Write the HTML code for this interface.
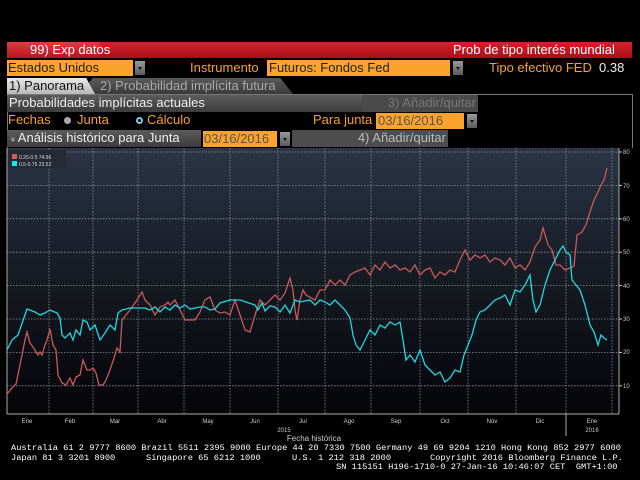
<!DOCTYPE html>
<html><head><meta charset="utf-8"><style>
*{margin:0;padding:0;box-sizing:border-box}
body{width:640px;height:480px;background:#000;position:relative;overflow:hidden;font-family:"Liberation Sans",sans-serif;font-size:13px}
.a{position:absolute;white-space:nowrap;line-height:16px}
.or{color:#f7a133}
.fld{background:#fba32d;color:#222}
.dd{position:absolute;width:10px;height:14px;background:linear-gradient(#9a9a9a,#5a5a5a);}
.dd:after{content:"";position:absolute;left:3px;top:6px;border:2px solid transparent;border-top:3px solid #111}
.mono{font-family:"Liberation Mono",monospace;font-size:8.7px;color:#fff;line-height:10px;white-space:pre}
</style></head><body>
<div class="a" style="left:7px;top:42px;width:625px;height:16px;background:linear-gradient(#d6202c,#a8101a)"></div>
<div class="a" style="left:7px;top:42px;width:93px;height:16px;background:linear-gradient(#e43a44,#b3141e)"></div>
<div class="a" style="left:30px;top:42px;color:#fff">99) Exp datos</div>
<div class="a" style="left:453px;top:42px;color:#fff">Prob de tipo interés mundial</div>

<div class="a fld" style="left:7px;top:60px;width:126px;height:16px;padding-left:1px">Estados Unidos</div>
<div class="dd" style="left:135px;top:61px"></div>
<div class="a or" style="left:190px;top:60px">Instrumento</div>
<div class="a fld" style="left:267px;top:60px;width:183px;height:16px;padding-left:2px">Futuros: Fondos Fed</div>
<div class="dd" style="left:453px;top:61px"></div>
<div class="a or" style="left:489px;top:60px">Tipo efectivo FED</div>
<div class="a" style="left:599px;top:60px;color:#eee">0.38</div>

<div class="a" style="left:80px;top:78px;width:213px;height:16px;background:linear-gradient(#5a5a5a,#3a3a3a);color:#aaa;padding-left:20px;clip-path:polygon(6% 0,94% 0,100% 100%,0 100%)">2) Probabilidad implícita futura</div>
<div class="a" style="left:7px;top:78px;width:88px;height:16px;background:linear-gradient(#e8e8e8,#b8b8b8);color:#111;padding-left:2px;clip-path:polygon(0 0,90% 0,100% 100%,0 100%)">1) Panorama</div>

<div class="a" style="left:7px;top:94px;width:626px;height:54px;border:1px solid #777;border-bottom:none"></div>
<div class="a" style="left:7px;top:95px;width:355px;height:17px;background:linear-gradient(#5c5c5c,#3c3c3c);color:#eee;padding-left:2px">Probabilidades implícitas actuales</div>
<div class="a" style="left:362px;top:95px;width:116px;height:17px;background:#4a4a4a;color:#777;text-align:right;padding-right:2px">3) Añadir/quitar</div>

<div class="a or" style="left:8px;top:112px">Fechas</div>
<div class="a" style="left:64px;top:117px;width:7px;height:7px;border-radius:50%;background:#aaa"></div>
<div class="a or" style="left:77px;top:112px">Junta</div>
<div class="a" style="left:136px;top:117px;width:7px;height:7px;border-radius:50%;border:2px solid #7cc8e8"></div>
<div class="a or" style="left:147px;top:112px">Cálculo</div>
<div class="a or" style="left:313px;top:112px">Para junta</div>
<div class="a fld" style="left:376px;top:113px;width:88px;height:16px;padding-left:2px;color:#555">03/16/2016</div>
<div class="dd" style="left:467px;top:114px"></div>

<div class="a" style="left:7px;top:130px;width:194px;height:17px;background:linear-gradient(#5c5c5c,#3c3c3c);color:#eee;padding-left:4px"><span style="font-size:7px;color:#bbb">¥</span> Análisis histórico para Junta</div>
<div class="a fld" style="left:203px;top:131px;width:74px;height:16px;padding-left:1px;color:#555">03/16/2016</div>
<div class="dd" style="left:280px;top:132px"></div>
<div class="a" style="left:292px;top:130px;width:156px;height:17px;background:#4d4d4d;color:#bbb;text-align:right;padding-right:2px">4) Añadir/quitar</div>

<svg class="a" style="left:0;top:0" width="640" height="480">
<defs><linearGradient id="bg" x1="0" y1="0" x2="0" y2="1">
<stop offset="0" stop-color="#2c3446"/><stop offset="0.3" stop-color="#1d2431"/><stop offset="0.55" stop-color="#14181e"/><stop offset="0.8" stop-color="#0b0c14"/><stop offset="1" stop-color="#050505"/></linearGradient></defs>
<rect x="7" y="148" width="612" height="266" fill="url(#bg)"/>
<g stroke="#8a8f98" stroke-width="0.8" stroke-dasharray="1.5,1.5">
<line x1="7" x2="619" y1="152" y2="152"/><line x1="7" x2="619" y1="185.4" y2="185.4"/><line x1="7" x2="619" y1="218.8" y2="218.8"/><line x1="7" x2="619" y1="252.2" y2="252.2"/><line x1="7" x2="619" y1="285.6" y2="285.6"/><line x1="7" x2="619" y1="319" y2="319"/><line x1="7" x2="619" y1="352.4" y2="352.4"/><line x1="7" x2="619" y1="385.8" y2="385.8"/>
<line y1="148" y2="414" x1="49" x2="49"/><line y1="148" y2="414" x1="93" x2="93"/><line y1="148" y2="414" x1="138" x2="138"/><line y1="148" y2="414" x1="184" x2="184"/><line y1="148" y2="414" x1="230" x2="230"/><line y1="148" y2="414" x1="278" x2="278"/><line y1="148" y2="414" x1="325" x2="325"/><line y1="148" y2="414" x1="371" x2="371"/><line y1="148" y2="414" x1="420" x2="420"/><line y1="148" y2="414" x1="468" x2="468"/><line y1="148" y2="414" x1="516" x2="516"/><line y1="148" y2="414" x1="566" x2="566"/><line y1="148" y2="414" x1="612" x2="612"/>
</g>
<line x1="7" x2="7" y1="148" y2="414" stroke="#aaa"/>
<line x1="619" x2="619" y1="148" y2="414" stroke="#aaa"/>
<line x1="7" x2="619" y1="414" y2="414" stroke="#aaa"/>
<line x1="566" x2="566" y1="414" y2="436" stroke="#aaa"/>
<g fill="#ccc" font-size="6" font-family="Liberation Sans,sans-serif">
<text x="623" y="154">80</text><text x="623" y="188">70</text><text x="623" y="221">60</text><text x="623" y="254">50</text><text x="623" y="288">40</text><text x="623" y="321">30</text><text x="623" y="354">20</text><text x="623" y="388">10</text>
<g text-anchor="middle"><text x="27" y="423">Ene</text><text x="70" y="423">Feb</text><text x="115" y="423">Mar</text><text x="162" y="423">Abr</text><text x="208" y="423">May</text><text x="255" y="423">Jun</text><text x="303" y="423">Jul</text><text x="349" y="423">Ago</text><text x="396" y="423">Sep</text><text x="445" y="423">Oct</text><text x="492" y="423">Nov</text><text x="540" y="423">Dic</text><text x="592" y="423">Ene</text>
<text x="284" y="432">2015</text><text x="592" y="432">2016</text></g>
<text x="314" y="441" font-size="8" text-anchor="middle">Fecha histórica</text>
</g>
<g stroke="#ccc"><line x1="619" x2="622" y1="152" y2="152"/><line x1="619" x2="622" y1="185.4" y2="185.4"/><line x1="619" x2="622" y1="218.8" y2="218.8"/><line x1="619" x2="622" y1="252.2" y2="252.2"/><line x1="619" x2="622" y1="285.6" y2="285.6"/><line x1="619" x2="622" y1="319" y2="319"/><line x1="619" x2="622" y1="352.4" y2="352.4"/><line x1="619" x2="622" y1="385.8" y2="385.8"/></g>
<rect x="8" y="150" width="58" height="18" fill="#252a34"/>
<rect x="12" y="154" width="5" height="5" fill="#e05555"/><rect x="12" y="161" width="5" height="5" fill="#18e8f0"/>
<text x="19" y="159" font-size="5" fill="#ddd" font-family="Liberation Sans,sans-serif">0.25-0.5  74.96</text>
<text x="19" y="166" font-size="5" fill="#ddd" font-family="Liberation Sans,sans-serif">0.5-0.75  23.52</text>
<polyline fill="none" stroke="#c85a5a" stroke-width="1.3" points="7,394 12,388 16,384 20,365 25,340 27,332 30,343 35,350 38,355 40,352 42,355 45,345 47,340 50,329 53,345 56,350 58,375 62,383 66,385 70,378 73,385 76,377 80,375 83,360 87,370 90,370 93,368 96,373 99,385 103,385 106,380 110,370 115,355 117,348 120,352 122,320 130,310 137,300 142,292 145,300 150,305 155,315 160,307 165,305 168,302 170,305 175,300 180,310 185,320 190,320 195,320 200,312 205,300 210,297 215,310 220,313 225,312 230,315 235,300 240,315 245,330 250,332 255,315 260,300 265,305 275,295 280,300 285,293 290,278 293,290 295,310 297,320 300,300 303,290 306,295 315,300 320,290 325,290 330,280 335,285 340,280 345,285 350,275 355,272 360,270 365,268 370,275 375,265 380,270 385,262 390,268 395,265 400,270 405,268 410,272 415,265 420,275 425,270 430,268 435,278 440,272 445,275 450,270 455,272 460,260 465,250 470,260 475,255 480,258 485,255 490,262 495,258 500,260 505,265 510,258 515,268 520,265 525,270 530,262 535,247 540,240 543,228 548,245 552,250 556,265 560,265 565,270 570,268 574,266 577,235 582,232 586,225 590,212 594,200 598,192 601,185 604,180 607,168"/>
<polyline fill="none" stroke="#20d8e0" stroke-width="1.3" points="7,350 12,340 18,335 27,309 35,312 40,315 45,313 50,310 57,313 60,318 62,335 65,338 70,333 73,340 76,330 80,335 83,320 87,322 90,330 95,325 100,340 105,333 110,325 115,330 118,313 122,310 130,308 140,308 145,308 150,310 155,307 160,312 165,307 170,310 175,305 180,308 185,305 190,309 195,308 200,307 205,307 210,310 215,309 220,303 230,300 240,300 255,305 258,310 262,303 265,311 270,306 275,307 280,312 285,305 290,313 295,300 300,302 310,300 315,305 320,300 325,302 330,305 335,300 340,305 345,310 350,318 353,335 356,345 360,350 365,340 370,330 375,335 380,325 385,328 390,322 395,325 400,322 403,340 406,360 410,355 415,362 420,350 425,365 430,370 435,375 440,372 445,382 450,378 455,370 460,372 464,355 468,345 472,335 476,320 480,312 485,310 490,305 495,300 500,298 505,295 510,305 515,290 520,292 525,285 530,275 533,300 536,312 540,305 545,285 550,270 555,260 560,250 563,246 566,252 570,255 572,280 576,285 580,290 585,305 590,325 594,332 598,345 601,335 604,338 607,340"/>
</svg>
<div class="a mono" style="left:11px;top:443px">Australia 61 2 9777 8600 Brazil 5511 2395 9000 Europe 44 20 7330 7500 Germany 49 69 9204 1210 Hong Kong 852 2977 6000</div>
<div class="a mono" style="left:11px;top:453px">Japan 81 3 3201 8900</div>
<div class="a mono" style="left:146px;top:453px">Singapore 65 6212 1000</div>
<div class="a mono" style="left:292px;top:453px">U.S. 1 212 318 2000</div>
<div class="a mono" style="left:430px;top:453px">Copyright 2016 Bloomberg Finance L.P.</div>
<div class="a mono" style="left:336px;top:462px">SN 115151 H196-1710-0 27-Jan-16 10:46:07 CET  GMT+1:00</div>
</body></html>
